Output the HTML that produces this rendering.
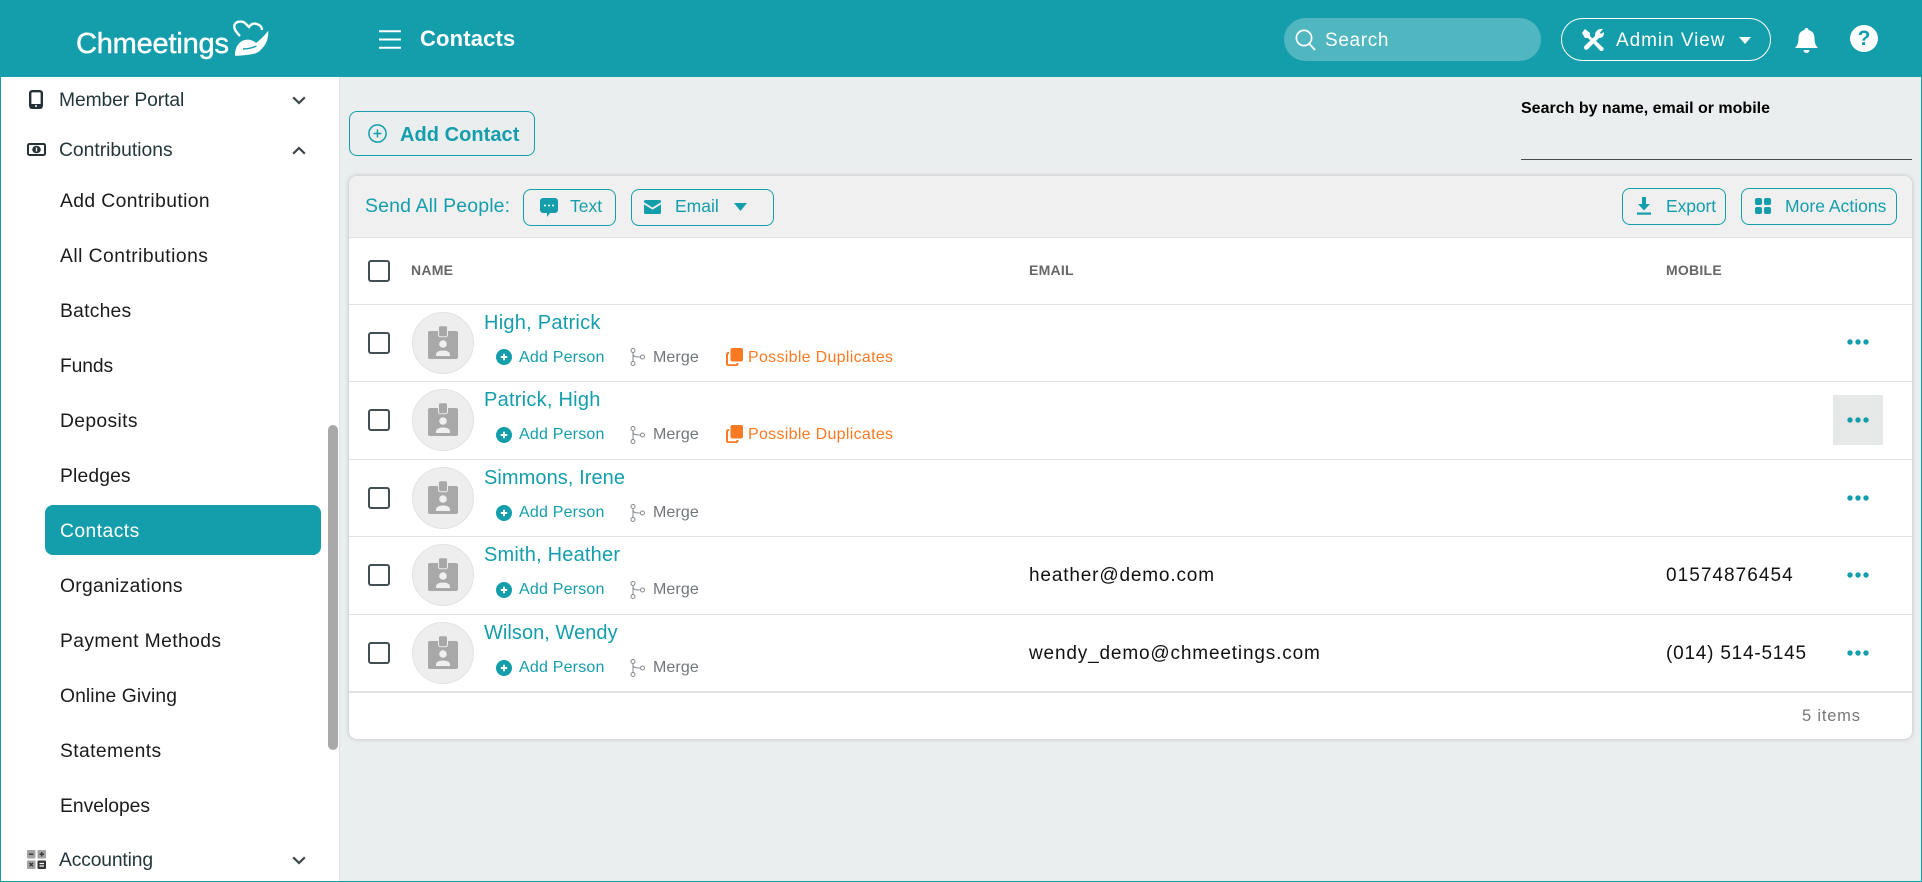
<!DOCTYPE html>
<html lang="en"><head><meta charset="utf-8"><title>Contacts</title>
<style>
*{box-sizing:border-box}
html,body{margin:0;padding:0;width:1922px;height:882px;overflow:hidden;background:#ebeeef;font-family:"Liberation Sans",Arial,sans-serif}
.a,svg.a{position:absolute;white-space:nowrap;line-height:1}
.hdr{position:absolute;left:0;top:0;width:1922px;height:77px;background:#149eac}
.side{position:absolute;left:1px;top:77px;width:339px;height:804px;background:#fff;border-right:1px solid #dfe3e4}
.frame{position:absolute;left:0;top:0;width:1922px;height:882px;border:1px solid #149eac;pointer-events:none}
.si{font-size:19.3px;letter-spacing:.4px;color:#1b1b1b;left:60px}
.sh{font-size:19.3px;color:#25363b;left:59px}
.btn{position:absolute;border:1px solid #149eac;border-radius:8px}
.t{color:#149eac}
.card{position:absolute;left:349px;top:176px;width:1563px;height:563px;background:#fff;border-radius:8px;box-shadow:0 0 5px rgba(0,0,0,.22)}
.bar{position:absolute;left:349px;top:176px;width:1563px;height:62px;background:#f0f0f0;border-bottom:1px solid #e0e1e1;border-radius:8px 8px 0 0}
.ln{position:absolute;left:349px;width:1563px;height:1px;background:#e0e1e1}
.cb{position:absolute;left:368px;width:22px;height:22px;border:2px solid #434e52;border-radius:3px;background:#fff}
.th{font-size:14px;font-weight:bold;color:#666;letter-spacing:.25px;top:263px}
.nm{left:484px;font-size:20px;letter-spacing:.25px;color:#149eac}
.ap{left:519px;font-size:16px;letter-spacing:.2px;color:#149eac}
.mg{left:653px;font-size:16px;letter-spacing:.1px;color:#72767b}
.pd{left:748px;font-size:16px;letter-spacing:.3px;color:#f97a22}
.em{left:1029px;font-size:19px;letter-spacing:.84px;color:#111}
.ph{left:1666px;font-size:19px;color:#111}
.av{position:absolute;left:412px;width:62px;height:62px;border-radius:50%;background:#eeeeee;border:1px solid #e2e2e2}
</style></head><body>
<svg width="0" height="0" style="position:absolute">
<defs>
<symbol id="badge" viewBox="0 0 30 33"><rect x="0" y="5" width="30" height="28" rx="2" fill="#a8a8a8"/><rect x="10.500" y="-.2" width="9" height="11" rx="2" fill="#a8a8a8" stroke="#ececec" stroke-width="1"/><circle cx="15" cy="18" r="3.800" fill="#f0f0f0"/><path d="M8 30v-1.500c0-2.500 3-4 7-4s7 1.500 7 4V30z" fill="#f0f0f0"/></symbol>
<symbol id="plus" viewBox="0 0 16 16"><circle cx="8" cy="8" r="8" fill="#149eac"/><path d="M8 4.800v6.400M4.800 8h6.400" stroke="#fff" stroke-width="2"/></symbol>
<symbol id="merge" viewBox="0 0 15 18"><g fill="none" stroke="#84888c" stroke-width="1"><circle cx="3" cy="2.500" r="2"/><circle cx="3" cy="15.500" r="2"/><circle cx="12.500" cy="9" r="2"/><path d="M3 4.500v9M3 6c0 2.500 2 3 7.500 3"/></g></symbol>
<symbol id="dup" viewBox="0 0 17 18"><rect x="4.500" y="0" width="12.500" height="13.500" rx="2" fill="#f97a22"/><path d="M3 5H2.500A1.500 1.500 0 0 0 1 6.500v9.200A1.500 1.500 0 0 0 2.500 17.200h7.500a1.500 1.500 0 0 0 1.500-1.500V15" fill="none" stroke="#f97a22" stroke-width="2"/></symbol>
<symbol id="dots" viewBox="0 0 22 6"><circle cx="3" cy="3" r="2.700" fill="#149eac"/><circle cx="11" cy="3" r="2.700" fill="#149eac"/><circle cx="19" cy="3" r="2.700" fill="#149eac"/></symbol>
<symbol id="chev" viewBox="0 0 14 9"><path d="M1.200 1.300 7 7l5.800-5.700" fill="none" stroke="#3c4548" stroke-width="2.200"/></symbol>
</defs></svg>

<div class="hdr"></div>
<div class="a" style="left:76px;top:30px;font-size:29px;letter-spacing:-.2px;color:#fff;-webkit-text-stroke:.45px #fff">Chmeetings</div>
<svg class="a" style="left:232px;top:19px" width="38" height="38" viewBox="0 0 38 38"><path d="M8 17C3 12 1 8 3 5 5 2 10 2 13 4l4 4c2-3 5-4 8-3 3 1 5 3 5 6" fill="none" stroke="#fff" stroke-width="2.400"/><path d="M3 36.700C3 30 5 25 10 22c4-2 9-2 13 1l1 1c4-3 8-7 12.300-12.300 0 6-1 11-4 15-3 4-6 7-10 8-5 1-13 2-19 2z" fill="#fff"/><path d="M11 30c5 0 9-1 13.500-3" fill="none" stroke="#149eac" stroke-width="1.400"/></svg>
<svg class="a" style="left:379px;top:30px" width="22" height="19" viewBox="0 0 22 19"><path d="M0 1.200h22M0 9.500h22M0 17.800h22" stroke="#fff" stroke-width="2"/></svg>
<div class="a" style="left:420px;top:28px;font-size:22px;font-weight:bold;letter-spacing:.15px;color:#fff">Contacts</div>

<div class="a" style="left:1284px;top:18px;width:257px;height:43px;border-radius:22px;background:#50b6c0"></div>
<svg class="a" style="left:1295px;top:29px" width="21" height="22" viewBox="0 0 21 22"><circle cx="9" cy="9" r="7.600" fill="none" stroke="#fff" stroke-width="1.700"/><path d="M14.500 15 20 21" stroke="#fff" stroke-width="1.700"/></svg>
<div class="a" style="left:1325px;top:31px;font-size:19px;letter-spacing:.65px;color:#fff">Search</div>
<div class="a" style="left:1561px;top:18px;width:210px;height:43px;border-radius:22px;border:1px solid #fff"></div>
<svg class="a" style="left:1582px;top:28px" width="22" height="23" viewBox="0 0 22 23"><path d="M3 1 8 5 8 8 11 11 9 13 6 10H3L0 5zM14 13 21 19.500a2 2 0 0 1-3 3L11 15z" fill="#fff"/><path d="M21 1l-3 3.500 1 1.500 3-2c.5 3-1.500 6-5 6L6 21a2.200 2.200 0 0 1-3.500-3L13 8c-.5-4 3-8 8-7z" fill="#fff"/></svg>
<div class="a" style="left:1616px;top:31px;font-size:19px;letter-spacing:.95px;color:#fff">Admin View</div>
<svg class="a" style="left:1739px;top:37px" width="12" height="7" viewBox="0 0 12 7"><path d="M0 0h12L6 7z" fill="#fff"/></svg>
<svg class="a" style="left:1795px;top:28px" width="23" height="25" viewBox="0 0 23 25"><path d="M11.500 0c1.200 0 2 .8 2 2 4 1 6 4 6 8 0 5 1 7 3.500 10H0c2.500-3 3.500-5 3.500-10 0-4 2-7 6-8 0-1.200.8-2 2-2z" fill="#fff"/><path d="M8.500 22h6a3 3 0 0 1-6 0z" fill="#fff"/></svg>
<div class="a" style="left:1850px;top:25px;width:28px;height:27px;border-radius:50%;background:#fff;color:#149eac;font-weight:bold;font-size:21px;line-height:28px;text-align:center">?</div>

<div class="side"></div>
<div class="a" style="left:328px;top:425px;width:10px;height:325px;background:#a9a9a9;border-radius:5px"></div>
<svg class="a" style="left:29px;top:90px" width="14" height="19" viewBox="0 0 14 19"><rect x="1.200" y="1.200" width="11.600" height="16.600" rx="2" fill="none" stroke="#263135" stroke-width="2.400"/><rect x="1" y="14" width="12" height="4.500" fill="#263135"/><circle cx="7" cy="16" r="1" fill="#fff"/></svg>
<div class="a sh" style="top:91px;letter-spacing:-.1px">Member Portal</div>
<svg class="a" style="left:292px;top:96px" width="14" height="9"><use href="#chev"/></svg>
<svg class="a" style="left:27px;top:143px" width="19" height="13" viewBox="0 0 19 13"><rect x="1" y="1" width="17" height="11" rx="1.500" fill="#fff" stroke="#263135" stroke-width="2"/><ellipse cx="9.500" cy="6.500" rx="4.300" ry="3.800" fill="#263135"/><rect x="8.800" y="4.500" width="1.400" height="4" fill="#fff"/></svg>
<div class="a sh" style="top:141px;letter-spacing:0">Contributions</div>
<svg class="a" style="left:292px;top:146px;transform:scaleY(-1)" width="14" height="9"><use href="#chev"/></svg>

<div class="a si" style="top:192px">Add Contribution</div>
<div class="a si" style="top:247px;letter-spacing:.47px">All Contributions</div>
<div class="a si" style="top:302px;letter-spacing:.25px">Batches</div>
<div class="a si" style="top:357px;letter-spacing:-.1px">Funds</div>
<div class="a si" style="top:412px;letter-spacing:.35px">Deposits</div>
<div class="a si" style="top:467px;letter-spacing:.15px">Pledges</div>
<div class="a" style="left:45px;top:505px;width:276px;height:50px;border-radius:8px;background:#149eac"></div>
<div class="a si" style="top:522px;color:#fff;letter-spacing:.45px">Contacts</div>
<div class="a si" style="top:577px;letter-spacing:.3px">Organizations</div>
<div class="a si" style="top:632px">Payment Methods</div>
<div class="a si" style="top:687px;letter-spacing:.1px">Online Giving</div>
<div class="a si" style="top:742px">Statements</div>
<div class="a si" style="top:797px;letter-spacing:0">Envelopes</div>
<svg class="a" style="left:27px;top:850px" width="19" height="19" viewBox="0 0 19 19"><rect width="8.500" height="8.500" rx="1" fill="#a3a3a3"/><rect x="10.500" width="8.500" height="8.500" rx="1" fill="#a3a3a3"/><rect y="10.500" width="8.500" height="8.500" rx="1" fill="#a3a3a3"/><rect x="10.500" y="10.500" width="8.500" height="8.500" rx="1" fill="#333"/><path d="M2 4.200h4.500M12.500 4.200h4.500M14.700 2v4.500M2.500 12.800l3.500 3.500M6 12.800l-3.500 3.500" stroke="#333" stroke-width="1.300"/><path d="M12.500 13.500h4.500M12.500 16h4.500" stroke="#fff" stroke-width="1.300"/></svg>
<div class="a sh" style="top:851px;letter-spacing:-.15px">Accounting</div>
<svg class="a" style="left:292px;top:856px" width="14" height="9"><use href="#chev"/></svg>

<div class="btn" style="left:349px;top:111px;width:186px;height:45px"></div>
<svg class="a" style="left:368px;top:124px" width="19" height="19" viewBox="0 0 19 19"><circle cx="9.500" cy="9.500" r="8.600" fill="none" stroke="#149eac" stroke-width="1.500"/><path d="M9.500 5.500v8M5.500 9.500h8" stroke="#149eac" stroke-width="1.500"/></svg>
<div class="a t" style="left:400px;top:125px;font-size:20px;font-weight:bold;letter-spacing:.05px">Add Contact</div>
<div class="a" style="left:1521px;top:101px;font-size:16px;font-weight:bold;color:#000">Search by name, email or mobile</div>
<div class="a" style="left:1521px;top:159px;width:391px;height:1px;background:#444b4e"></div>

<div class="card"></div><div class="bar"></div>
<div class="a t" style="left:365px;top:197px;font-size:19.500px;letter-spacing:.13px">Send All People:</div>
<div class="btn" style="left:523px;top:189px;width:93px;height:37px"></div>
<svg class="a" style="left:540px;top:198px" width="18" height="20" viewBox="0 0 18 20"><path d="M3 0h12a3 3 0 0 1 3 3v9a3 3 0 0 1-3 3h-5l-3 4v-4H3a3 3 0 0 1-3-3V3a3 3 0 0 1 3-3z" fill="#149eac"/><circle cx="5" cy="7.500" r="1" fill="#fff"/><circle cx="9" cy="7.500" r="1" fill="#fff"/><circle cx="13" cy="7.500" r="1" fill="#fff"/></svg>
<div class="a t" style="left:570px;top:198px;font-size:17.500px">Text</div>
<div class="btn" style="left:631px;top:189px;width:143px;height:37px"></div>
<svg class="a" style="left:644px;top:200px" width="17" height="14" viewBox="0 0 17 14"><path d="M1.500 0h14A1.500 1.500 0 0 1 17 1.500v.8L8.500 7.500 0 2.300v-.8A1.500 1.500 0 0 1 1.500 0z" fill="#149eac"/><path d="M0 4.400 8.500 9.600 17 4.400v8.100a1.500 1.500 0 0 1-1.500 1.500h-14A1.500 1.500 0 0 1 0 12.500z" fill="#149eac"/></svg>
<div class="a t" style="left:675px;top:198px;font-size:17.500px">Email</div>
<svg class="a" style="left:734px;top:203px" width="13" height="8" viewBox="0 0 13 8"><path d="M0 0h13L6.500 8z" fill="#149eac"/></svg>
<div class="btn" style="left:1622px;top:188px;width:104px;height:37px"></div>
<svg class="a" style="left:1637px;top:197px" width="14" height="18" viewBox="0 0 14 18"><path d="M5 0h4v7h4l-6 6.500L1 7h4z" fill="#149eac"/><rect y="15.500" width="14" height="2.200" fill="#149eac"/></svg>
<div class="a t" style="left:1666px;top:198px;font-size:17.500px;letter-spacing:-.1px">Export</div>
<div class="btn" style="left:1741px;top:188px;width:156px;height:37px"></div>
<svg class="a" style="left:1755px;top:198px" width="16" height="16" viewBox="0 0 16 16"><rect width="7" height="7" rx="2" fill="#149eac"/><rect x="9" width="7" height="7" rx="2" fill="#149eac"/><rect y="9" width="7" height="7" rx="2" fill="#149eac"/><rect x="9" y="9" width="7" height="7" rx="2" fill="#149eac"/></svg>
<div class="a t" style="left:1785px;top:198px;font-size:17.500px;letter-spacing:.02px">More Actions</div>

<div class="cb" style="top:260px"></div>
<div class="a th" style="left:411px">NAME</div>
<div class="a th" style="left:1029px">EMAIL</div>
<div class="a th" style="left:1666px">MOBILE</div>
<div class="ln" style="top:304px"></div>
<div class="ln" style="top:381px"></div>
<div class="ln" style="top:459px"></div>
<div class="ln" style="top:536px"></div>
<div class="ln" style="top:614px"></div>
<div class="ln" style="top:691px;height:2px"></div>

<!-- Row 1 -->
<div class="cb" style="top:332px"></div><div class="av" style="top:312px"></div>
<svg class="a" style="left:428px;top:326px" width="30" height="33"><use href="#badge"/></svg>
<div class="a nm" style="top:313px">High, Patrick</div>
<svg class="a" style="left:496px;top:349px" width="16" height="16"><use href="#plus"/></svg><div class="a ap" style="top:350px">Add Person</div>
<svg class="a" style="left:630px;top:348px" width="15" height="18"><use href="#merge"/></svg><div class="a mg" style="top:350px">Merge</div>
<svg class="a" style="left:726px;top:348px" width="17" height="18"><use href="#dup"/></svg><div class="a pd" style="top:350px">Possible Duplicates</div>
<svg class="a" style="left:1847px;top:339px" width="22" height="6"><use href="#dots"/></svg>

<!-- Row 2 -->
<div class="cb" style="top:409px"></div><div class="av" style="top:389px"></div>
<svg class="a" style="left:428px;top:403px" width="30" height="33"><use href="#badge"/></svg>
<div class="a nm" style="top:390px">Patrick, High</div>
<svg class="a" style="left:496px;top:427px" width="16" height="16"><use href="#plus"/></svg><div class="a ap" style="top:427px">Add Person</div>
<svg class="a" style="left:630px;top:426px" width="15" height="18"><use href="#merge"/></svg><div class="a mg" style="top:427px">Merge</div>
<svg class="a" style="left:726px;top:425px" width="17" height="18"><use href="#dup"/></svg><div class="a pd" style="top:427px">Possible Duplicates</div>
<div class="a" style="left:1833px;top:395px;width:50px;height:50px;background:#e6e8e8"></div>
<svg class="a" style="left:1847px;top:417px" width="22" height="6"><use href="#dots"/></svg>

<!-- Row 3 -->
<div class="cb" style="top:487px"></div><div class="av" style="top:467px"></div>
<svg class="a" style="left:428px;top:481px" width="30" height="33"><use href="#badge"/></svg>
<div class="a nm" style="top:468px;letter-spacing:.07px">Simmons, Irene</div>
<svg class="a" style="left:496px;top:505px" width="16" height="16"><use href="#plus"/></svg><div class="a ap" style="top:505px">Add Person</div>
<svg class="a" style="left:630px;top:504px" width="15" height="18"><use href="#merge"/></svg><div class="a mg" style="top:505px">Merge</div>
<svg class="a" style="left:1847px;top:495px" width="22" height="6"><use href="#dots"/></svg>

<!-- Row 4 -->
<div class="cb" style="top:564px"></div><div class="av" style="top:544px"></div>
<svg class="a" style="left:428px;top:558px" width="30" height="33"><use href="#badge"/></svg>
<div class="a nm" style="top:545px;letter-spacing:.2px">Smith, Heather</div>
<svg class="a" style="left:496px;top:582px" width="16" height="16"><use href="#plus"/></svg><div class="a ap" style="top:582px">Add Person</div>
<svg class="a" style="left:630px;top:581px" width="15" height="18"><use href="#merge"/></svg><div class="a mg" style="top:582px">Merge</div>
<div class="a em" style="top:566px">heather@demo.com</div>
<div class="a ph" style="top:566px;letter-spacing:1.04px">01574876454</div>
<svg class="a" style="left:1847px;top:572px" width="22" height="6"><use href="#dots"/></svg>

<!-- Row 5 -->
<div class="cb" style="top:642px"></div><div class="av" style="top:622px"></div>
<svg class="a" style="left:428px;top:636px" width="30" height="33"><use href="#badge"/></svg>
<div class="a nm" style="top:623px;letter-spacing:.05px">Wilson, Wendy</div>
<svg class="a" style="left:496px;top:660px" width="16" height="16"><use href="#plus"/></svg><div class="a ap" style="top:660px">Add Person</div>
<svg class="a" style="left:630px;top:659px" width="15" height="18"><use href="#merge"/></svg><div class="a mg" style="top:660px">Merge</div>
<div class="a em" style="top:644px">wendy_demo@chmeetings.com</div>
<div class="a ph" style="top:644px;letter-spacing:.78px">(014) 514-5145</div>
<svg class="a" style="left:1847px;top:650px" width="22" height="6"><use href="#dots"/></svg>

<div class="a" style="left:1802px;top:708px;font-size:16.500px;letter-spacing:.8px;color:#777">5 items</div>
<div class="frame"></div>
</body></html>
